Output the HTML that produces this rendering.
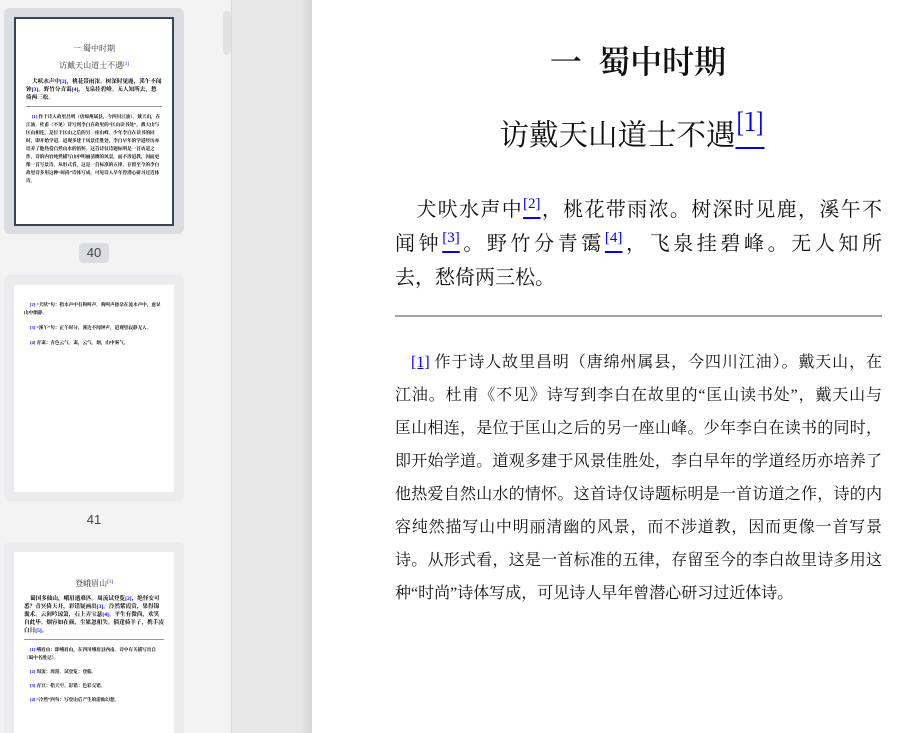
<!DOCTYPE html>
<html><head><meta charset="utf-8">
<style>
*{margin:0;padding:0;box-sizing:border-box}
html,body{width:900px;height:733px;overflow:hidden;background:#e8e8e8;font-family:"Liberation Serif","Noto Serif CJK SC",serif}
#side{position:absolute;left:0;top:0;width:232px;height:733px;background:#f3f3f3;border-right:1px solid #dadada;overflow:hidden}
.card{position:absolute;left:4px;width:180px;border-radius:6px;background:#ececee}
.card.sel{background:#dcdde1}
.pg{position:absolute;left:10px;width:160px;background:#fff;overflow:hidden;color:#000}
.sel .pg{border:2px solid #3a4256}
.lbl{position:absolute;font-family:"Liberation Sans",sans-serif;font-size:13px;color:#444;text-align:center}
.t{font-size:5.6px;line-height:8px;font-weight:bold;letter-spacing:0}
.n{font-size:4.6px;line-height:8px;font-weight:bold;color:#000}
.h{text-align:center;font-size:8px;color:#333}
.b{color:#00f}
#scroll{position:absolute;left:223px;top:11px;width:8px;height:44px;border-radius:4px;background:#e2e2e2}
#shadow{position:absolute;left:300px;top:0;width:12px;height:733px;background:linear-gradient(90deg,rgba(0,0,0,0),rgba(0,0,0,0.08))}
#page{position:absolute;left:312px;top:0;width:588px;height:733px;background:#fff;color:#111}
.title{position:absolute;top:38px;left:0;width:652px;text-align:center;font-size:32px;line-height:44px;font-family:"Noto Serif CJK SC",serif;font-weight:600}
.sub{position:absolute;top:113px;left:-6px;width:652px;text-align:center;font-size:29.5px;line-height:40px;font-family:"Noto Serif CJK SC",serif}
.sub sup{font-size:0.85em}
a{color:#00f;text-decoration:underline}
sup{font-size:0.75em;vertical-align:0.55em;line-height:0}
.poem{position:absolute;left:83px;width:487px;top:193px;font-size:20px;line-height:34px}
.poem div,.note div{text-align:justify;text-align-last:justify;white-space:nowrap}
.poem div.last,.note div.last{text-align-last:left}
hr{position:absolute;left:83px;width:487px;top:315px;border:0;border-top:2px solid #a0a0a0}
.note{position:absolute;left:83px;width:487px;top:346px;font-size:16px;line-height:33px}
</style></head><body>
<div id="side">
 <div class="card sel" style="top:8px;height:226px">
  <div class="pg" style="top:9px;height:209px">
   <div class="h" style="margin-top:24px">一 蜀中时期</div>
   <div class="h" style="margin-top:6px">访戴天山道士不遇<span class="b" style="font-size:5px;vertical-align:3px">[1]</span></div>
   <div class="t" style="margin:7px 10px 0;text-indent:6px">犬吠水声中<span class="b">[2]</span>，桃花带雨浓。树深时见鹿，溪午不闻钟<span class="b">[3]</span>。野竹分青霭<span class="b">[4]</span>，飞泉挂碧峰。无人知所去，愁倚两三松。</div>
   <div style="margin:4px 10px;border-top:1px solid #999"></div>
   <div class="n" style="margin:6px 10px 0;text-indent:6px"><span class="b">[1]</span> 作于诗人故里昌明（唐绵州属县，今四川江油）。戴天山，在江油。杜甫《不见》诗写到李白在故里的“匡山读书处”，戴天山与匡山相连，是位于匡山之后的另一座山峰。少年李白在读书的同时，即开始学道。道观多建于风景佳胜处，李白早年的学道经历亦培养了他热爱自然山水的情怀。这首诗仅诗题标明是一首访道之作，诗的内容纯然描写山中明丽清幽的风景，而不涉道教，因而更像一首写景诗。从形式看，这是一首标准的五律，存留至今的李白故里诗多用这种“时尚”诗体写成，可见诗人早年曾潜心研习过近体诗。</div>
  </div>
 </div>
 <div class="lbl" style="left:79px;top:243px;width:30px;height:20px;line-height:20px;background:#dcdde1;border-radius:4px">40</div>
 <div class="card" style="top:275px;height:226px">
  <div class="pg" style="top:10px;height:207px">
   <div class="n" style="margin:16px 10px 0;text-indent:6px"><span class="b">[2]</span> “犬吠”句：指水声中有狗叫声。狗叫声掺杂在流水声中，愈显山中幽静。</div>
   <div class="n" style="margin:7px 10px 0;text-indent:6px"><span class="b">[3]</span> “溪午”句：正午时分，溪边不闻钟声，道观里寂静无人。</div>
   <div class="n" style="margin:7px 10px 0;text-indent:6px"><span class="b">[4]</span> 青霭：青色云气。霭，云气。烟，山中雾气。</div>
  </div>
 </div>
 <div class="lbl" style="left:79px;top:511px;width:30px;height:18px;line-height:18px">41</div>
 <div class="card" style="top:542px;height:200px">
  <div class="pg" style="top:10px;height:200px">
   <div class="h" style="margin-top:26px">登峨眉山<span class="b" style="font-size:5px;vertical-align:3px">[1]</span></div>
   <div class="t" style="margin:6px 10px 0;text-indent:6px">蜀国多仙山，峨眉邈难匹。周流试登览<span class="b">[2]</span>，绝怪安可悉？青冥倚天开，彩错疑画出<span class="b">[3]</span>。泠然紫霞赏，果得锦囊术。云间吟琼箫，石上弄宝瑟<span class="b">[4]</span>。平生有微尚，欢笑自此毕。烟容如在颜，尘累忽相失。倘逢骑羊子，携手凌白日<span class="b">[5]</span>。</div>
   <div style="margin:4px 10px;border-top:1px solid #999"></div>
   <div class="n" style="margin:6px 10px 0;text-indent:6px"><span class="b">[1]</span> 峨眉山：即峨眉山，在四川峨眉县西南。诗中有关描写出自《蜀中名胜记》。</div>
   <div class="n" style="margin:6px 10px 0;text-indent:6px"><span class="b">[2]</span> 周流：周游。试登览：登临。</div>
   <div class="n" style="margin:6px 10px 0;text-indent:6px"><span class="b">[3]</span> 青冥：指天空。彩错：色彩交错。</div>
   <div class="n" style="margin:6px 10px 0;text-indent:6px"><span class="b">[4]</span> “冷然”四句：写登山后产生的游仙幻想。</div>
  </div>
 </div>
 <div id="scroll"></div>
</div>
<div id="shadow"></div>
<div id="page">
 <div class="title">一&nbsp; 蜀中时期</div>
 <div class="sub">访戴天山道士不遇<a><sup>[1]</sup></a></div>
 <div class="poem">
  <div>&emsp;犬吠水声中<a><sup>[2]</sup></a>，桃花带雨浓。树深时见鹿，溪午不</div>
  <div>闻钟<a><sup>[3]</sup></a>。野竹分青霭<a><sup>[4]</sup></a>，飞泉挂碧峰。无人知所</div>
  <div class="last">去，愁倚两三松。</div>
 </div>
 <hr>
 <div class="note">
  <div>&emsp;<a>[1]</a> 作于诗人故里昌明（唐绵州属县，今四川江油）。戴天山，在</div>
  <div>江油。杜甫《不见》诗写到李白在故里的“匡山读书处”，戴天山与</div>
  <div>匡山相连，是位于匡山之后的另一座山峰。少年李白在读书的同时，</div>
  <div>即开始学道。道观多建于风景佳胜处，李白早年的学道经历亦培养了</div>
  <div>他热爱自然山水的情怀。这首诗仅诗题标明是一首访道之作，诗的内</div>
  <div>容纯然描写山中明丽清幽的风景，而不涉道教，因而更像一首写景</div>
  <div>诗。从形式看，这是一首标准的五律，存留至今的李白故里诗多用这</div>
  <div class="last">种“时尚”诗体写成，可见诗人早年曾潜心研习过近体诗。</div>
 </div>
</div>
</body></html>
